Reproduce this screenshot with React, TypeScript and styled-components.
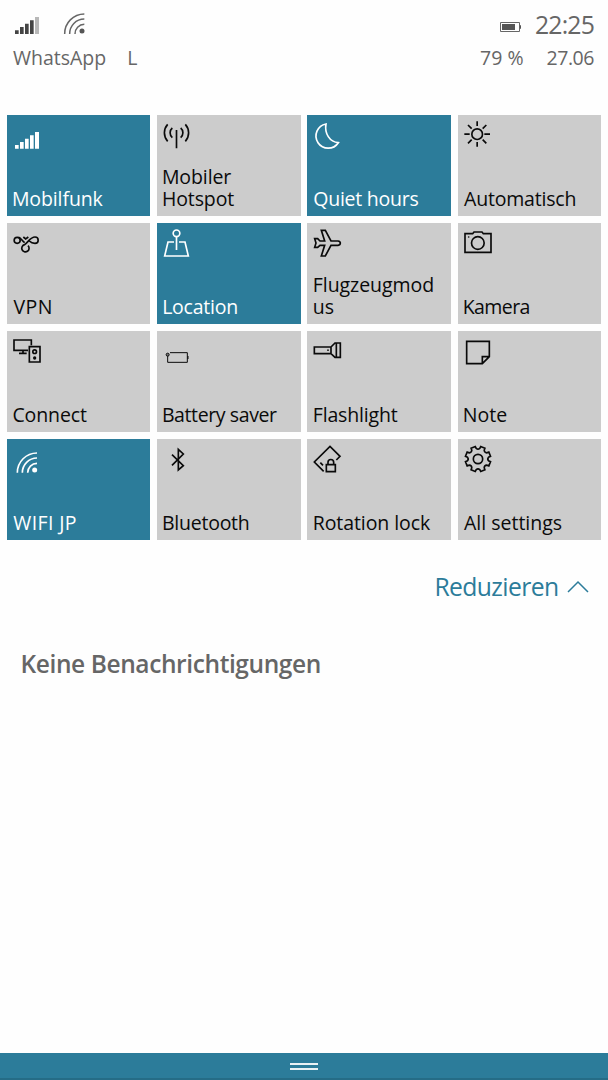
import React from 'react';
import styled, { createGlobalStyle } from 'styled-components';

const TEAL = '#2c7c9a';

const GlobalStyle = createGlobalStyle`
  * { box-sizing: border-box; }
  body { margin: 0; background: #fefefe; font-family: 'Open Sans', 'Noto Sans', sans-serif; }
  svg { display: block; flex: none; }
`;

const Screen = styled.main`
  width: 608px;
  height: 1080px;
  display: flex;
  flex-direction: column;
  overflow: hidden;
`;

const StatusBar = styled.header`
  height: 115px;
  flex: none;
  padding: 7px 14px 0 13px;
  color: #666;
`;

const StatusRow = styled.div<{ $h: number }>`
  display: flex;
  justify-content: space-between;
  height: ${p => p.$h}px;
`;

const StatusGroup = styled.div<{ $gap: number }>`
  display: flex;
  gap: ${p => p.$gap}px;
`;

const Text = styled.span<{ $size?: number; $ls?: number }>`
  display: block;
  font-size: ${p => p.$size ?? 19.5}px;
  letter-spacing: ${p => p.$ls ?? 0}px;
  white-space: pre;
`;

const Clock = styled(Text)`
  line-height: 34px;
`;

const StatusText = styled(Text)`
  line-height: 28px;
`;

const Grid = styled.section`
  display: grid;
  grid-template-columns: repeat(4, 143.4px);
  grid-auto-rows: 101px;
  gap: 7px 6.85px;
  padding-left: 6.9px;
`;

const Tile = styled.button<{ $on?: boolean }>`
  display: flex;
  flex-direction: column;
  justify-content: space-between;
  align-items: flex-start;
  border: 0;
  margin: 0;
  padding: 0 0 6.7px;
  text-align: left;
  font-family: inherit;
  background: ${p => (p.$on ? TEAL : '#ccc')};
  color: ${p => (p.$on ? '#fff' : '#0a0a0a')};
`;

const Label = styled(Text)<{ $pad: number }>`
  width: 131px;
  padding-left: ${p => p.$pad}px;
  line-height: 21.7px;
  white-space: pre-line;
  word-break: break-word;
`;

const CollapseRow = styled.div`
  display: flex;
  justify-content: flex-end;
  align-items: center;
  gap: 8.5px;
  height: 40px;
  margin-top: 27px;
  padding-right: 19px;
  color: ${TEAL};
`;

const CollapseText = styled(Text)`
  line-height: 40px;
`;

const Empty = styled(Text)`
  margin: 37px 0 0 20.5px;
  line-height: 40px;
  font-weight: 600;
  color: #666;
`;

const Handle = styled.footer`
  margin-top: auto;
  height: 27px;
  background: ${TEAL};
  border-bottom: 2px solid #256c86;
  display: flex;
  flex-direction: column;
  align-items: center;
  gap: 3px;
  padding-top: 10px;
`;

const Grip = styled.i`
  width: 28px;
  height: 2px;
  background: #e9f2f5;
`;

/* Tile glyphs are drawn on a grid of three units per pixel. */
const Glyph = ({ x, children, w = 5 }: { x: number; children: React.ReactNode; w?: number }) => (
  <svg width="48" height="48" viewBox={`${x} 15 144 144`} fill="none" stroke="currentColor" strokeWidth={w}>
    {children}
  </svg>
);

const gearPath = (() => {
  const pt = (deg: number, r: number) => {
    const a = (deg * Math.PI) / 180;
    return `${(522 + r * Math.cos(a)).toFixed(1)} ${(75 + r * Math.sin(a)).toFixed(1)}`;
  };
  let d = '';
  for (let i = 0; i < 8; i++) {
    const a = 22.5 + i * 45;
    d += `${i ? 'L' : 'M'}${pt(a - 10, 38.5)}L${pt(a + 10, 38.5)}L${pt(a + 13, 32)}Q${pt(a + 22.5, 27)} ${pt(a + 32, 32)}`;
  }
  return d + 'Z';
})();

type TileDef = { label: string; ls: number; pad: number; on?: boolean; icon: React.ReactNode };

const tiles: TileDef[] = [
  {
    label: 'Mobilfunk', ls: -0.1, pad: 5, on: true,
    icon: <Glyph x={21}><path stroke="none" fill="currentColor" d="M45 105h11v11h-11zM60 96h11v20h-11zM75 86h11v30h-11zM90 76h11v40h-11zM105 66h12v50h-12z" /></Glyph>,
  },
  {
    label: 'Mobiler Hotspot', ls: -0.1, pad: 4.8,
    icon: <Glyph x={471}><path d="M529.500 60V115M503 43A38 38 0 0 0 503 94M517 54A19 19 0 0 0 517 83M542 54A19 19 0 0 1 542 83M556 43A38 38 0 0 1 556 94" /></Glyph>,
  },
  {
    label: 'Quiet hours', ls: -0.25, pad: 5.9, on: true,
    icon: <Glyph x={10}><path d="M67 42A36.500 36.500 0 1 0 104 98C78 96 62 70 67 42Z" /></Glyph>,
  },
  {
    label: 'Automatisch', ls: -0.2, pad: 6.5,
    icon: <Glyph x={462}><circle cx="519.500" cy="72.500" r="16" /><path d="M519.500 34V48M519.500 96V110M481 72.500H497M541 72.500H558M492 45L503 56M547 45L536 56M492 100L503 89M547 100L536 89" /></Glyph>,
  },
  {
    label: 'VPN', ls: 0.45, pad: 6.5,
    icon: <Glyph x={21}><circle cx="51.500" cy="67" r="9" /><path d="M56 58C63 60 66 68 74 74M70 57L77 63L85 57M88 69C92 73 97 76 105 76A9.500 9.500 0 0 0 105 57C91 57 85 72 74 80A11 11 0 1 0 84 83" /></Glyph>,
  },
  {
    label: 'Location', ls: -0.22, pad: 5, on: true,
    icon: <Glyph x={471}><circle cx="529.500" cy="46" r="10" /><path d="M529.500 56V96M522 72H504L494 114H565L555 72H537" /></Glyph>,
  },
  {
    label: 'Flugzeugmodus', ls: -0.05, pad: 5.4,
    icon: <Glyph x={10}><path d="M33 62H42L49 69H63L53 37H65L82 69H103Q110 70 110 75Q110 81 103 82H82L65 114H53L63 82H49L42 88H33L37 75Z" /></Glyph>,
  },
  {
    label: 'Kamera', ls: -0.6, pad: 5.2,
    icon: <Glyph x={462}><path d="M483 47H506L510 42H534L538 47H561V103H483Z" /><circle cx="521.500" cy="75" r="19" /><circle cx="494" cy="57" r="2.500" fill="currentColor" stroke="none" /></Glyph>,
  },
  {
    label: 'Connect', ls: -0.1, pad: 5.5,
    icon: <Glyph x={21}><path d="M84 73H42V42H94V58M69 73V82M57 82H80M88 62H120V108H88Z" /><circle cx="104" cy="77" r="5.500" /><circle cx="104" cy="96" r="5" fill="currentColor" stroke="none" /></Glyph>,
  },
  {
    label: 'Battery saver', ls: -0.4, pad: 4.8,
    icon: <Glyph x={471} w={3}><path d="M510 80H562V109H503V86M564 90V99" /><circle cx="503" cy="86" r="4.500" fill="#777" /></Glyph>,
  },
  {
    label: 'Flashlight', ls: -0.17, pad: 5.4,
    icon: <Glyph x={10}><path d="M82 63H32V83H82M82 63L94 51H110V94H94L82 83ZM98 51V94" /><circle cx="73" cy="72.500" r="2.500" fill="currentColor" stroke="none" /></Glyph>,
  },
  {
    label: 'Note', ls: 0, pad: 5.2,
    icon: <Glyph x={462}><path d="M556 46H488V113H535L556 92ZM535 113V92H556" /></Glyph>,
  },
  {
    label: 'WIFI JP', ls: 0.38, pad: 6.4, on: true,
    icon: <Glyph x={21}><path d="M52 116A59 59 0 0 1 111 57M67 116A44 44 0 0 1 111 72M83 116A28 28 0 0 1 111 88" /><circle cx="104" cy="108" r="7.500" fill="currentColor" stroke="none" /></Glyph>,
  },
  {
    label: 'Bluetooth', ls: -0.25, pad: 4.9,
    icon: <Glyph x={471}><path d="M516 62L550 95L535 108V46L550 60L516 94" /></Glyph>,
  },
  {
    label: 'Rotation lock', ls: -0.08, pad: 5.4,
    icon: <Glyph x={10}><path d="M60 112L32 84L79 37L109 67L98 78M50 86L58 94M68 92H95V113H68ZM73 92V85A8.500 8.500 0 0 1 90 85V92" /></Glyph>,
  },
  {
    label: 'All settings', ls: 0, pad: 6.4,
    icon: <Glyph x={462}><path d={gearPath} /><circle cx="522" cy="75" r="14" /></Glyph>,
  },
];

export default function App() {
  return (
    <Screen>
      <GlobalStyle />
      <StatusBar>
        <StatusRow $h={37}>
          <svg width="80" height="32" viewBox="39 21 240 96" fill="none">
            <path fill="#444" d="M45 91h11v11h-11zM60 81h11v21h-11zM75 71h11v31h-11zM90 61h11v41h-11z" />
            <path fill="#b8b8b8" d="M105 51h12v51h-12z" />
            <path stroke="#666" strokeWidth="4.500" d="M194 102A59 59 0 0 1 253 42M209 102A44 44 0 0 1 253 57M225 102A28 28 0 0 1 253 73" />
            <circle cx="246" cy="93" r="7.500" fill="#555" />
          </svg>
          <StatusGroup $gap={13}>
            <svg width="22" height="32" viewBox="150 21 66 96" fill="none">
              <path stroke="#666" strokeWidth="3" d="M151.500 67.500H208.500V94.500H151.500Z" />
              <path fill="#555" d="M156 72h39v18h-39zM210 76h3v10h-3z" />
            </svg>
            <Clock $size={24.8} $ls={-0.85}>22:25</Clock>
          </StatusGroup>
        </StatusRow>
        <StatusRow $h={28}>
          <StatusGroup $gap={21}>
            <StatusText $ls={0}>WhatsApp</StatusText>
            <StatusText>L</StatusText>
          </StatusGroup>
          <StatusGroup $gap={23}>
            <StatusText $ls={0}>79 %</StatusText>
            <StatusText $ls={-0.45}>27.06</StatusText>
          </StatusGroup>
        </StatusRow>
      </StatusBar>
      <Grid>
        {tiles.map(t => (
          <Tile key={t.label} $on={t.on}>
            {t.icon}
            <Label $ls={t.ls} $pad={t.pad}>{t.label}</Label>
          </Tile>
        ))}
      </Grid>
      <CollapseRow>
        <CollapseText $size={24.7} $ls={-0.6}>Reduzieren</CollapseText>
        <svg width="22" height="14" viewBox="0 0 22 14" fill="none" stroke="currentColor" strokeWidth="1.500">
          <path d="M1 12L11 2L21 12" />
        </svg>
      </CollapseRow>
      <Empty as="h2" $size={24.5} $ls={-0.4}>Keine Benachrichtigungen</Empty>
      <Handle>
        <Grip />
        <Grip />
      </Handle>
    </Screen>
  );
}
